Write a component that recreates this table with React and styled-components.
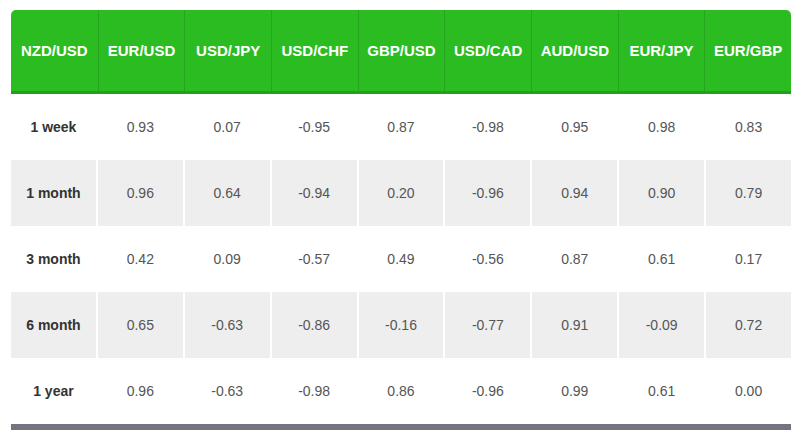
import React from "react";
import styled, { createGlobalStyle } from "styled-components";

const Global = createGlobalStyle`
  html, body { margin: 0; padding: 0; background: #fff; }
  body { font-family: "Liberation Sans", Arial, sans-serif; }
`;

const pairs = ["NZD/USD", "EUR/USD", "USD/JPY", "USD/CHF", "GBP/USD", "USD/CAD", "AUD/USD", "EUR/JPY", "EUR/GBP"];

const rows = [
  ["1 week", "0.93", "0.07", "-0.95", "0.87", "-0.98", "0.95", "0.98", "0.83"],
  ["1 month", "0.96", "0.64", "-0.94", "0.20", "-0.96", "0.94", "0.90", "0.79"],
  ["3 month", "0.42", "0.09", "-0.57", "0.49", "-0.56", "0.87", "0.61", "0.17"],
  ["6 month", "0.65", "-0.63", "-0.86", "-0.16", "-0.77", "0.91", "-0.09", "0.72"],
  ["1 year", "0.96", "-0.63", "-0.98", "0.86", "-0.96", "0.99", "0.61", "0.00"],
];

const Page = styled.div`
  padding: 10px 0 0 11px;
`;

const Table = styled.div`
  width: 780px;
  border-bottom: 6px solid #74747f;
`;

const HeadRow = styled.div`
  display: grid;
  grid-template-columns: repeat(9, 1fr);
  height: 81px;
  background: #2bbc22;
  border-bottom: 3px solid #23a01b;
  border-radius: 5px 5px 0 0;
`;

const HeadCell = styled.div`
  display: flex;
  align-items: center;
  justify-content: center;
  color: #fff;
  font-weight: bold;
  font-size: 15px;
  border-left: ${(p) => (p.$first ? "none" : "1px solid #25a51d")};
`;

const Row = styled.div`
  display: grid;
  grid-template-columns: repeat(9, 1fr);
  column-gap: 2px;
  height: 66px;
  background: #fff;
`;

const Cell = styled.div`
  display: flex;
  align-items: center;
  justify-content: center;
  font-size: 14px;
  background: ${(p) => (p.$shade ? "#eeeeee" : "#fff")};
  color: ${(p) => (p.$label ? "#333" : "#555")};
  font-weight: ${(p) => (p.$label ? "bold" : "normal")};
`;

export default function App() {
  return (
    <>
      <Global />
      <Page>
        <Table>
          <HeadRow>
            {pairs.map((p, i) => (
              <HeadCell key={p} $first={i === 0}>{p}</HeadCell>
            ))}
          </HeadRow>
          {rows.map((r, ri) => (
            <Row key={r[0]}>
              {r.map((v, ci) => (
                <Cell key={ci} $label={ci === 0} $shade={ri % 2 === 1}>{v}</Cell>
              ))}
            </Row>
          ))}
        </Table>
      </Page>
    </>
  );
}
